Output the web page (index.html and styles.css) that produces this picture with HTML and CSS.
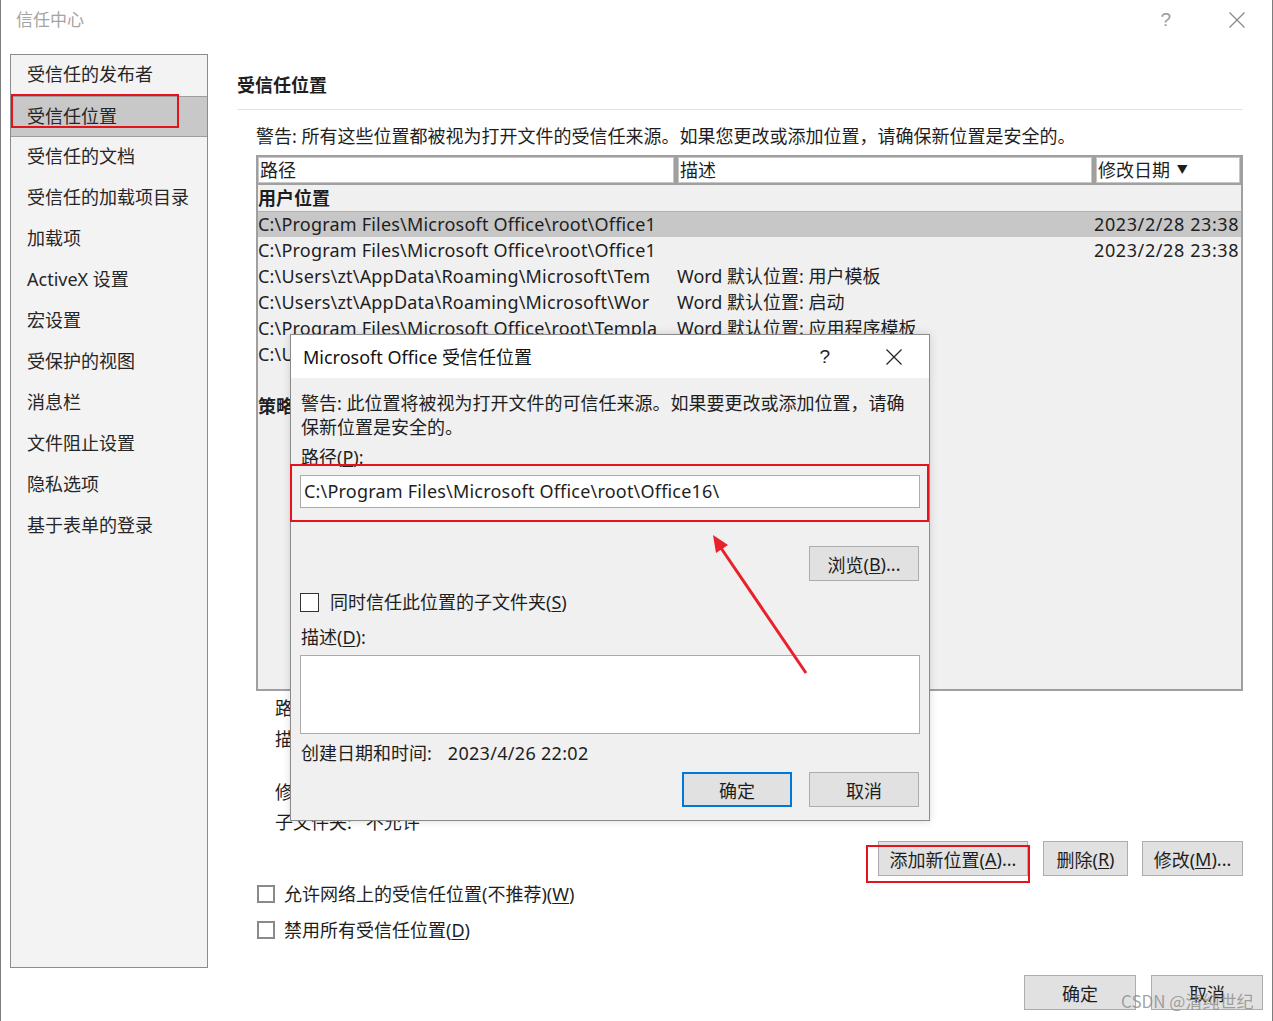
FILE: index.html
```html
<!DOCTYPE html>
<html lang="zh-CN">
<head>
<meta charset="utf-8">
<title>信任中心</title>
<link rel="stylesheet" href="styles.css">
</head>
<body>
<div class="window">
  <header class="titlebar">
    <span class="wtitle">信任中心</span>
    <div class="wctrls">
      <span class="whelp">?</span>
      <svg class="wclose" width="16" height="16" viewBox="0 0 16 16"><path d="M0.5 0.5 L15.5 15.5 M15.5 0.5 L0.5 15.5" stroke="#8a8a8a" stroke-width="1.3" fill="none"/></svg>
    </div>
  </header>

  <div class="middle">
    <nav class="sidebar">
      <div class="navitem">受信任的发布者</div>
      <div class="navitem selected">受信任位置</div>
      <div class="navitem">受信任的文档</div>
      <div class="navitem">受信任的加载项目录</div>
      <div class="navitem">加载项</div>
      <div class="navitem">ActiveX 设置</div>
      <div class="navitem">宏设置</div>
      <div class="navitem">受保护的视图</div>
      <div class="navitem">消息栏</div>
      <div class="navitem">文件阻止设置</div>
      <div class="navitem">隐私选项</div>
      <div class="navitem">基于表单的登录</div>
    </nav>

    <main class="main">
      <h2 class="heading">受信任位置</h2>
      <p class="warn">警告: 所有这些位置都被视为打开文件的受信任来源。如果您更改或添加位置，请确保新位置是安全的。</p>

      <div class="table">
        <div class="thead">
          <div class="th th1">路径</div>
          <div class="th th2">描述</div>
          <div class="th th3">修改日期 <span class="caret">▼</span></div>
        </div>
        <div class="tbody">
          <div class="group">用户位置</div>
          <div class="tr sel"><span class="td c1">C:\Program Files\Microsoft Office\root\Office1</span><span class="td c2"></span><span class="td c3">2023/2/28 23:38</span></div>
          <div class="tr"><span class="td c1">C:\Program Files\Microsoft Office\root\Office1</span><span class="td c2"></span><span class="td c3">2023/2/28 23:38</span></div>
          <div class="tr"><span class="td c1">C:\Users\zt\AppData\Roaming\Microsoft\Tem</span><span class="td c2">Word 默认位置: 用户模板</span><span class="td c3"></span></div>
          <div class="tr"><span class="td c1">C:\Users\zt\AppData\Roaming\Microsoft\Wor</span><span class="td c2">Word 默认位置: 启动</span><span class="td c3"></span></div>
          <div class="tr"><span class="td c1">C:\Program Files\Microsoft Office\root\Templa</span><span class="td c2">Word 默认位置: 应用程序模板</span><span class="td c3"></span></div>
          <div class="tr"><span class="td c1">C:\Users\zt\AppData\Roaming\Microsoft\Excel</span><span class="td c2">Excel 默认位置: 用户启动</span><span class="td c3"></span></div>
          <div class="tr"></div>
          <div class="group">策略位置</div>
        </div>
      </div>

      <div class="details">
        <div class="dline">路径:</div>
        <div class="dline d2">描述:</div>
        <div class="dline d3">修改日期:</div>
        <div class="dline d4">子文件夹:&nbsp;&nbsp;&nbsp;不允许</div>
      </div>

      <div class="actions">
        <button class="btn b-add">添加新位置(<u>A</u>)...</button>
        <button class="btn b-del">删除(<u>R</u>)</button>
        <button class="btn b-mod">修改(<u>M</u>)...</button>
      </div>

      <div class="checks">
        <label class="chk"><span class="box"></span>允许网络上的受信任位置(不推荐)(<u>W</u>)</label>
        <label class="chk"><span class="box"></span>禁用所有受信任位置(<u>D</u>)</label>
      </div>
    </main>
  </div>

  <footer class="footer">
    <button class="btn fbtn">确定</button>
    <button class="btn fbtn">取消</button>
  </footer>

  <section class="dialog">
    <div class="dtitlebar">
      <span class="dtitle">Microsoft Office 受信任位置</span>
      <span class="dhelp">?</span>
      <svg class="dclose" width="16" height="16" viewBox="0 0 16 16"><path d="M0.5 0.5 L15.5 15.5 M15.5 0.5 L0.5 15.5" stroke="#222" stroke-width="1.2" fill="none"/></svg>
    </div>
    <div class="dbody">
      <p class="dwarn">警告: 此位置将被视为打开文件的可信任来源。如果要更改或添加位置，请确<br>保新位置是安全的。</p>
      <div class="dlabel">路径(<u>P</u>):</div>
      <div class="dinput">C:\Program Files\Microsoft Office\root\Office16\</div>
      <div class="drow-right"><button class="btn dbtn">浏览(<u>B</u>)...</button></div>
      <label class="dchk"><span class="dbox"></span>同时信任此位置的子文件夹(<u>S</u>)</label>
      <div class="dlabel dlabel2">描述(<u>D</u>):</div>
      <div class="dtext"></div>
      <div class="dcreated"><span>创建日期和时间:</span><span class="dval">2023/4/26 22:02</span></div>
      <div class="dbuttons">
        <button class="btn dbtn primary">确定</button>
        <button class="btn dbtn">取消</button>
      </div>
    </div>
  </section>

  <div class="mark mark-nav"></div>
  <div class="mark mark-path"></div>
  <div class="mark mark-add"></div>

  <svg class="arrow" width="1273" height="1021" viewBox="0 0 1273 1021">
    <line x1="806" y1="673" x2="721" y2="548" stroke="#e8212b" stroke-width="3"/>
    <polygon points="713,535 728,545 716,553" fill="#e8212b"/>
  </svg>

  <div class="watermark">CSDN @清纯世纪</div>
</div>
</body>
</html>
```

FILE: styles.css
```css
* { box-sizing: border-box; }

body {
  margin: 0;
  font-family: "Noto Sans", "Noto Sans CJK SC", sans-serif;
  font-size: 18px;
  color: #1e1e1e;
  background: #fff;
}

u { text-decoration: underline; text-underline-offset: 2px; text-decoration-thickness: 1px; }

.window {
  position: relative;
  width: 1273px;
  height: 1021px;
  border-left: 1px solid #7c7c7c;
  border-right: 1px solid #7c7c7c;
  overflow: hidden;
  background: #fff;
}

/* title bar */
.titlebar {
  height: 54px;
  display: flex;
  align-items: flex-start;
  padding: 8px 27px 0 15px;
}
.wtitle { color: #a3a3a3; line-height: 24px; font-size: 17px; }
.wctrls { margin-left: auto; display: flex; align-items: center; height: 24px; }
.whelp { color: #9a9a9a; font-size: 19px; line-height: 24px; margin-right: 58px; font-family: "Liberation Sans", sans-serif; }
.wclose { display: block; }

/* middle */
.middle { display: flex; height: 914px; }

.sidebar {
  margin-left: 9px;
  width: 198px;
  height: 914px;
  border: 1px solid #8c8c8c;
  background: #f3f3f3;
}
.navitem {
  height: 41px;
  line-height: 39px;
  padding-left: 16px;
  color: #262626;
  white-space: nowrap;
}
.navitem.selected {
  background: #c8c8c8;
  border-top: 1px solid #9d9d9d;
  border-bottom: 1px solid #9d9d9d;
}

.main {
  margin-left: 29px;
  width: 1006px;
  display: flex;
  flex-direction: column;
}
.heading {
  margin: 19px 0 0 0;
  font-size: 18px;
  font-weight: bold;
  line-height: 24px;
  padding-bottom: 12px;
  border-bottom: 1px solid #e3e3e3;
}
.warn {
  margin: 14px 0 0 19px;
  line-height: 24px;
  font-size: 18px;
  white-space: nowrap;
}

/* table */
.table {
  margin: 7px 0 0 19px;
  width: 987px;
  height: 536px;
  border: 2px solid #a0a0a0;
  border-top: 0;
  background: #f0f0f0;
  overflow: hidden;
}
.thead {
  display: flex;
  height: 30px;
  background: #a0a0a0;
  padding: 2px 1px 2px 0;
  gap: 4px;
}
.th {
  background: #fff;
  border: 1px solid #c6c6c6;
  line-height: 24px;
  padding-left: 1px;
  white-space: nowrap;
}
.th1 { width: 416px; }
.th2 { width: 414px; }
.th3 { flex: 1; }
.caret { font-size: 11px; vertical-align: 3px; margin-left: 2px; }

.tbody { padding-top: 0; }
.group { height: 26px; line-height: 26px; font-weight: bold; padding-left: 0; }
.tr { display: flex; height: 26px; line-height: 26px; }
.tr.sel { background: #c7c7c7; border-top: 1px solid #b0b0b0; line-height: 24px; }
.td { white-space: nowrap; overflow: hidden; }
.c1 { width: 419px; letter-spacing: 0.2px; }
.c2 { width: 417px; }
.c3 { flex: 1; text-align: right; padding-right: 2px; letter-spacing: 0.6px; }

/* details under table */
.details { margin-left: 38px; padding-top: 4px; }
.dline { height: 26px; line-height: 26px; white-space: nowrap; }
.d2 { margin-top: 5px; }
.d3 { margin-top: 27px; }
.d4 { margin-top: 4px; }

/* action buttons */
.btn {
  font-family: inherit;
  font-size: 18px;
  color: #1e1e1e;
  background: #e1e1e1;
  border: 1px solid #adadad;
  height: 35px;
  padding: 0;
  display: inline-flex;
  align-items: center;
  justify-content: center;
  white-space: nowrap;
}
.actions {
  margin-top: 6px;
  display: flex;
  justify-content: flex-end;
  gap: 15px;
  padding-right: 0;
}
.b-add { width: 150px; }
.b-del { width: 85px; margin-right: -1px; }
.b-mod { width: 101px; }

.checks { margin: 6px 0 0 20px; display: flex; flex-direction: column; gap: 12px; }
.chk { display: flex; align-items: center; height: 24px; line-height: 24px; }
.box {
  width: 18px; height: 18px;
  border: 2px solid #8a8a8a;
  background: #fff;
  margin-right: 9px;
}

/* footer */
.footer {
  margin-top: 7px;
  display: flex;
  justify-content: flex-end;
  gap: 15px;
  padding-right: 9px;
}
.fbtn { width: 112px; }

/* dialog */
.dialog {
  position: absolute;
  left: 289px;
  top: 334px;
  width: 640px;
  height: 487px;
  border: 1px solid #8a8a8a;
  background: #f0f0f0;
  box-shadow: 0 0 8px rgba(0,0,0,0.15);
}
.dtitlebar {
  height: 43px;
  background: #fff;
  display: flex;
  align-items: center;
  padding: 0 27px 0 12px;
}
.dtitle { line-height: 24px; color: #111; }
.dhelp { margin-left: auto; margin-right: 56px; font-family: "Liberation Sans", sans-serif; font-size: 19px; color: #222; }
.dclose { display: block; }

.dbody { padding: 13px 10px 14px 10px; display: flex; flex-direction: column; }
.dwarn { margin: 0; line-height: 24px; white-space: nowrap; }
.dlabel { margin-top: 6px; line-height: 24px; }
.dinput {
  margin-top: 6px;
  margin-left: -1px;
  margin-right: -1px;
  height: 33px;
  border: 1px solid #ababab;
  background: #fff;
  line-height: 31px;
  padding-left: 3px;
  white-space: nowrap;
  letter-spacing: 0.2px;
}
.drow-right { margin-top: 38px; display: flex; justify-content: flex-end; }
.dbtn { width: 110px; }
.dchk { margin-top: 9px; display: flex; align-items: center; height: 24px; line-height: 24px; }
.dbox {
  width: 19px; height: 19px;
  border: 1px solid #333;
  background: #fff;
  margin-left: -1px;
  margin-right: 11px;
}
.dlabel2 { margin-top: 11px; }
.dtext {
  margin-top: 6px;
  margin-left: -1px;
  margin-right: -1px;
  height: 79px;
  border: 1px solid #ababab;
  background: #fff;
}
.dcreated { margin-top: 7px; line-height: 24px; display: flex; white-space: nowrap; }
.dval { margin-left: 16px; letter-spacing: 0.3px; }
.dbuttons { margin-top: 7px; display: flex; justify-content: flex-end; gap: 17px; }
.dbtn.primary { border: 2px solid #0078d7; }

/* annotations */
.mark { position: absolute; border: 2px solid #e3141e; }
.mark-nav { left: 10px; top: 94px; width: 168px; height: 34px; }
.mark-path { left: 289px; top: 464px; width: 639px; height: 58px; }
.mark-add { left: 865px; top: 845px; width: 164px; height: 38px; }

.arrow { position: absolute; left: -1px; top: 0; pointer-events: none; }

.watermark {
  position: absolute;
  left: 1120px;
  top: 990px;
  font-family: "Noto Sans CJK SC", sans-serif;
  font-size: 17px;
  line-height: 22px;
  color: rgba(140,140,140,0.8);
  white-space: nowrap;
}
```
